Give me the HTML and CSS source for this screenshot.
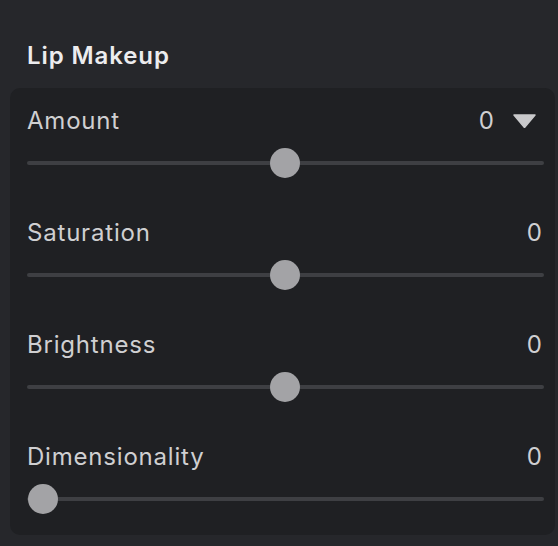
FILE: index.html
```html
<!DOCTYPE html>
<html>
<head>
<meta charset="utf-8">
<link rel="stylesheet" href="styles.css">
</head>
<body>
<div class="header"><h1 class="title">Lip Makeup</h1></div>
<div class="panel">
  <div class="row">
    <div class="line">
      <span class="label">Amount</span>
      <span class="value-group"><span class="value">0</span><svg class="caret" width="23" height="14" viewBox="0 0 23 14"><path d="M1 1 L22 1 L11.5 13.5 Z" fill="#c9c9cb" stroke="#c9c9cb" stroke-width="1.5" stroke-linejoin="round"/></svg></span>
    </div>
    <div class="slider"><div class="track"></div><div class="thumb" style="left: 243px"></div></div>
  </div>
  <div class="row">
    <div class="line">
      <span class="label">Saturation</span>
      <span class="value">0</span>
    </div>
    <div class="slider"><div class="track"></div><div class="thumb" style="left: 243px"></div></div>
  </div>
  <div class="row">
    <div class="line">
      <span class="label">Brightness</span>
      <span class="value">0</span>
    </div>
    <div class="slider"><div class="track"></div><div class="thumb" style="left: 243px"></div></div>
  </div>
  <div class="row">
    <div class="line">
      <span class="label">Dimensionality</span>
      <span class="value">0</span>
    </div>
    <div class="slider"><div class="track"></div><div class="thumb" style="left: 1px"></div></div>
  </div>
</div>
</body>
</html>
```
FILE: styles.css
```css
html, body {
  margin: 0;
  padding: 0;
}
body {
  background: #26272b;
  width: 558px;
  height: 546px;
  overflow: hidden;
  font-family: Inter, "Noto Sans", sans-serif;
  color: #d4d4d6;
}
.header {
  height: 88px;
  padding-left: 27px;
  box-sizing: border-box;
}
.title {
  margin: 0;
  padding-top: 40px;
  font-size: 24px;
  line-height: 32px;
  font-weight: 600;
  letter-spacing: 0.9px;
  color: #ececee;
}
.panel {
  margin-left: 10px;
  width: 545px;
  height: 447px;
  box-sizing: border-box;
  background: #1f2023;
  border-radius: 10px;
  padding: 0 11px 0 17px;
}
.row {
  height: 112px;
  padding-top: 21px;
  box-sizing: border-box;
}
.line {
  height: 24px;
  display: flex;
  align-items: center;
  justify-content: space-between;
}
.label {
  font-size: 24px;
  line-height: 24px;
  letter-spacing: 0.8px;
  color: #cfcfd1;
}
.value {
  font-size: 24px;
  line-height: 24px;
  color: #cfcfd1;
  margin-right: 2px;
}
.value-group {
  display: flex;
  align-items: center;
}
.value-group .value {
  margin-right: 19px;
}
.caret {
  display: block;
  margin-right: 8px;
}
.slider {
  position: relative;
  margin-top: 15px;
  height: 30px;
  display: flex;
  align-items: center;
}
.track {
  width: 100%;
  height: 4px;
  border-radius: 2px;
  background: #3e3f43;
}
.thumb {
  position: absolute;
  top: 0;
  width: 30px;
  height: 30px;
  border-radius: 50%;
  background: #a3a3a6;
}
```
